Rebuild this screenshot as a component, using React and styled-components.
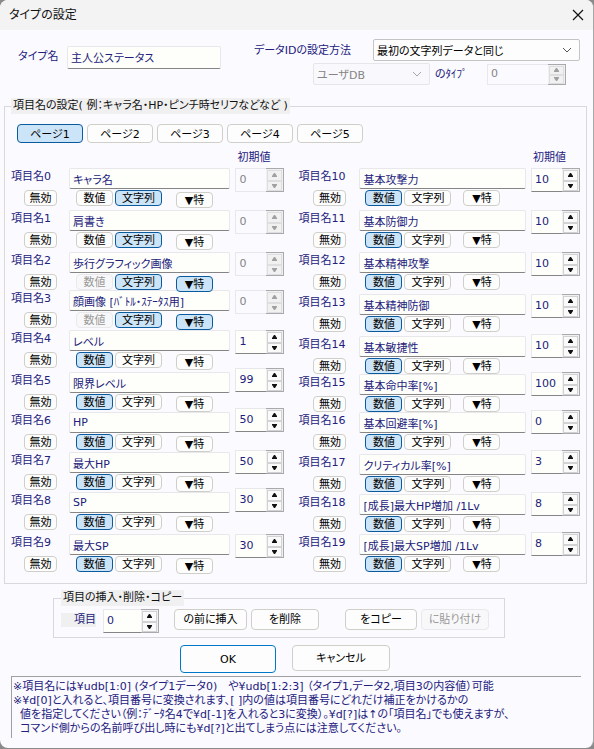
import React, { useState } from "react";
import styled, { createGlobalStyle, css } from "styled-components";

const navy = "#22207c";

const GlobalStyle = createGlobalStyle`
  *, *::before, *::after { box-sizing: border-box; }
  body { margin: 0; background: #8a8a8a; }
  body, button, input, select {
    font-family: "DejaVu Sans", "Noto Sans CJK JP", sans-serif;
    font-size: 11px;
    font-feature-settings: "palt";
  }
`;

const Dialog = styled.main`
  display: flex;
  flex-direction: column;
  min-height: calc(100vh - 1px);
  background: #fbfaff;
  border-right: 1px solid #a8a8a8;
  border-radius: 8px;
  color: ${navy};
  overflow: hidden;
  line-height: 14px;
  white-space: nowrap;
`;

const TitleBar = styled.header`
  display: flex;
  align-items: center;
  justify-content: space-between;
  height: 30px;
  padding: 0 9px;
  background: #f3f3f3;
  color: #111;
`;

const Title = styled.h1`
  margin: 0;
  font-size: 12px;
  font-weight: 400;
`;

const CloseButton = styled.button`
  display: flex;
  padding: 0;
  border: 0;
  background: none;
  color: #111;
`;

const TypeSettings = styled.section`
  display: flex;
  justify-content: space-between;
  height: 68px;
  padding: 9px 13px 0 18px;
`;

const NameField = styled.div`
  display: flex;
  align-items: center;
  height: 22px;
  margin-top: 7px;
`;

const NameLabel = styled.label`
  width: 49px;
`;

const IdSettings = styled.div`
  width: 326px;
`;

const IdRow = styled.div`
  display: flex;
  align-items: center;
  height: 22px;
  margin-bottom: 2px;
  padding-left: ${(p) => (p.$indent ? "59px" : 0)};
`;

const MethodLabel = styled.label`
  flex: 1;
  padding-top: 2px;
`;

const SelectBox = styled.span`
  display: grid;
  grid-template-columns: 1fr 18px;
  align-items: center;
  width: ${(p) => p.$width};
  height: 22px;
  border: 1px solid ${(p) => (p.$off ? "#e6e5e8" : "#c4c4c4")};
  border-radius: 2px;
  background: ${(p) => (p.$off ? "#f9f8fc" : "#fdfdfd")};
  color: ${(p) => (p.$off ? "#a6a6a6" : "#555")};

  select {
    grid-area: 1 / 1 / 2 / 3;
    width: 100%;
    height: 20px;
    padding: 2px 3px 0;
    border: 0;
    appearance: none;
    background: none;
    color: #000;
  }
  select:disabled { color: #858585; opacity: 1; }
  svg { grid-area: 1 / 2; pointer-events: none; }
`;

const TypeLabel = styled.label`
  width: 57px;
  padding: 2px 0 0 5px;
`;

const TextInput = styled.input`
  width: ${(p) => p.$width || "100%"};
  height: ${(p) => (p.$width ? "23px" : "21px")};
  padding: 0 3px;
  border: 1px solid #e8e7eb;
  border-bottom-color: #858585;
  border-radius: 2px;
  background: #fefffa;
  color: ${navy};
  line-height: 14px;
`;

const Spin = styled.span`
  display: grid;
  grid-template-columns: 1fr 18px;
  width: ${(p) => p.$width || "100%"};
  height: ${(p) => (p.$short ? "21px" : "24px")};
  flex: none;

  input {
    min-width: 0;
    width: 100%;
    padding: 0 0 1px 3px;
    border: 1px solid #e8e7eb;
    border-right: 0;
    border-bottom-color: #858585;
    background: #fefffa;
    color: ${navy};
  }
  input:disabled {
    border-bottom-color: #e8e7eb;
    background: #fbfaff;
    color: #858585;
  }
`;

const Arrows = styled.span`
  display: grid;
  grid-template-rows: 1fr 1fr;
  padding: 1px 1px 0;
  border: 1px solid #a9a9ad;
  border-left: 0;
  background: #f0f0f0;
`;

const Arrow = styled.button`
  display: flex;
  align-items: center;
  justify-content: center;
  min-height: 0;
  padding: 0;
  border: 1px solid #d2d2d4;
  background: #fafafa;
  color: #111;
  &:disabled { color: #a0a0a0; background: #f1f1f1; border-color: #dedee0; }
`;

const Group = styled.fieldset`
  min-width: 0;
  margin: 0 6px 0 4px;
  padding: 0 6px 11px;
  border: 1px solid #d9d8dc;
`;

const Legend = styled.legend`
  height: 16px;
  padding: 0 2px;
  background: #f0f0f0;
  color: #111;
  line-height: 15px;
`;

const Tabs = styled.nav`
  display: flex;
  gap: 4px;
  padding: 10px 6px 0;
`;

const onStyle = css`
  border-color: #0a5a9e;
  background: #cce4f7;
`;

const Button = styled.button`
  height: 16px;
  padding: 1px 0 0;
  border: 1px solid #cfcec8;
  border-radius: 4px;
  background: #fdfdfd;
  color: #000;
  line-height: 12px;
  white-space: nowrap;
  ${(p) => p.$on && onStyle}
  &:disabled { color: #989898; border-color: #e9e9ec; background: #f8f8fa; }
`;

const TabButton = styled(Button)`
  width: 66px;
  height: 19px;
  padding-top: 2px;
`;

const Halves = styled.div`
  display: grid;
  grid-template-columns: 273fr 281fr;
  gap: 14px;
  padding-top: 6px;
`;

const Half = styled.section`
  display: grid;
  grid-template-columns: 1fr 49px;
  column-gap: 5px;
`;

const ValuesHeading = styled.div`
  grid-column: 2;
  height: 19px;
  padding: 2px 0 0 2px;
`;

const Items = styled.div`
  grid-column: 1;
`;

const Values = styled.div`
  grid-column: 2;
`;

const Item = styled.div`
  display: grid;
  grid-template-columns: ${(p) => p.$labelWidth} 1fr;
  grid-template-rows: 21px 16px;
  row-gap: 1px;
  height: ${(p) => p.$height};
`;

const ItemLabel = styled.label`
  padding-top: 2px;
`;

const ValueCell = styled.div`
  height: ${(p) => p.$height};
`;

const DisableButton = styled(Button)`
  width: 33px;
  margin-left: ${(p) => p.$indent};
`;

const KindButtons = styled.div`
  display: flex;
  gap: 2px;
  padding-left: ${(p) => (p.$low ? "7px" : "6px")};
  z-index: 1;
`;

const NumberButton = styled(Button)`
  width: 37px;
`;

const StringButton = styled(Button)`
  width: 47px;
`;

const SpecialButton = styled(Button)`
  width: 37px;
  margin-left: ${(p) => (p.$low ? "12px" : "10px")};
  margin-top: ${(p) => (p.$low ? "2px" : 0)};
`;

const EditGroup = styled(Group)`
  align-self: flex-start;
  width: 452px;
  max-width: calc(100% - 59px);
  margin: 6px 0 0 53px;
  padding: 0 15px 4px 7px;
`;

const EditRow = styled.div`
  display: flex;
  align-items: flex-start;
  gap: 4px;
  padding-top: 3px;
`;

const EditLabel = styled.label`
  width: 35px;
  margin: 4px 3px 0 0;
  background: #f0f0f0;
  text-align: right;
`;

const EditButton = styled(Button)`
  width: ${(p) => p.$width};
  height: 21px;
  margin-left: ${(p) => p.$gap || 0};
`;

const Actions = styled.footer`
  display: flex;
  gap: 16px;
  padding: 7px 0 3px 180px;
`;

const ActionButton = styled(Button)`
  width: ${(p) => (p.$primary ? "96px" : "98px")};
  height: ${(p) => (p.$primary ? "28px" : "26px")};
  padding-top: 2px;
  border-color: ${(p) => (p.$primary ? "#0078c8" : "#cfcec8")};
`;

const Notes = styled.p`
  margin: 0 12px 0 11px;
  min-height: 62px;
  padding: 3px 0 0 1px;
  border-top: 1px solid #a0a0a0;
  border-left: 1px solid #a0a0a0;
  white-space: pre;
`;

const Chevron = () => (
  <svg width="12" height="8" viewBox="0 0 12 8" fill="none" stroke="currentColor" strokeWidth="1">
    <path d="M2 2l4 4 4-4" />
  </svg>
);

function Spinner({ id, label, value, disabled, width, short }) {
  const [current, setCurrent] = useState(value);
  return (
    <Spin $width={width} $short={short}>
      <input
        id={id}
        aria-label={label}
        value={current}
        disabled={disabled}
        onChange={(e) => setCurrent(e.target.value)}
      />
      <Arrows>
        <Arrow type="button" aria-label="増やす" disabled={disabled} onClick={() => setCurrent(Number(current) + 1)}>
          <svg width="7" height="4" viewBox="0 0 7 4" fill="currentColor"><path d="M3 0h1L6 3v1H1V3z" /></svg>
        </Arrow>
        <Arrow type="button" aria-label="減らす" disabled={disabled} onClick={() => setCurrent(Number(current) - 1)}>
          <svg width="7" height="4" viewBox="0 0 7 4" fill="currentColor"><path d="M3 4h1L6 1V0H1v1z" /></svg>
        </Arrow>
      </Arrows>
    </Spin>
  );
}

const leftItems = [
  { name: "キャラ名", text: true, value: 0, height: 42, valueHeight: 42 },
  { name: "肩書き", text: true, value: 0, height: 42, valueHeight: 42 },
  { name: "歩行グラフィック画像", text: true, special: true, value: 0, height: 38, valueHeight: 38 },
  { name: "顔画像 [ﾊﾞﾄﾙ・ｽﾃｰﾀｽ用]", text: true, special: true, value: 0, height: 40, valueHeight: 40 },
  { name: "レベル", value: 1, height: 42, valueHeight: 38 },
  { name: "限界レベル", value: 99, height: 40, valueHeight: 40 },
  { name: "HP", value: 50, height: 40, valueHeight: 42 },
  { name: "最大HP", value: 50, height: 40, valueHeight: 38 },
  { name: "SP", value: 30, height: 42, valueHeight: 46 },
  { name: "最大SP", value: 30, height: 38, valueHeight: 38 },
];

const rightItems = [
  { name: "基本攻撃力", value: 10, height: 42, valueHeight: 42 },
  { name: "基本防御力", value: 10, height: 42, valueHeight: 42 },
  { name: "基本精神攻撃", value: 10, height: 42, valueHeight: 42 },
  { name: "基本精神防御", value: 10, height: 42, valueHeight: 40 },
  { name: "基本敏捷性", value: 10, height: 38, valueHeight: 38 },
  { name: "基本命中率[%]", value: 100, height: 38, valueHeight: 38 },
  { name: "基本回避率[%]", value: 0, height: 42, valueHeight: 40 },
  { name: "クリティカル率[%]", value: 3, height: 40, valueHeight: 42 },
  { name: "[成長]最大HP増加 /1Lv", value: 8, height: 40, valueHeight: 40 },
  { name: "[成長]最大SP増加 /1Lv", value: 8, height: 38, valueHeight: 38 },
];

function ItemColumn({ items, first, labelWidth, indent, low }) {
  return (
    <Half>
      <ValuesHeading>初期値</ValuesHeading>
      <Items>
        {items.map((item, i) => (
          <Item key={item.name} $height={`${item.height}px`} $labelWidth={labelWidth}>
            <ItemLabel htmlFor={`item${first + i}`}>項目名{first + i}</ItemLabel>
            <TextInput id={`item${first + i}`} defaultValue={item.name} />
            <DisableButton type="button" $indent={indent}>無効</DisableButton>
            <KindButtons $low={low}>
              <NumberButton type="button" $on={!item.text} disabled={item.special}>数値</NumberButton>
              <StringButton type="button" $on={item.text}>文字列</StringButton>
              <SpecialButton type="button" $on={item.special} $low={low}>▼特</SpecialButton>
            </KindButtons>
          </Item>
        ))}
      </Items>
      <Values>
        {items.map((item, i) => (
          <ValueCell key={item.name} $height={`${item.valueHeight}px`}>
            <Spinner label={`項目名${first + i} 初期値`} value={item.value} disabled={item.text} />
          </ValueCell>
        ))}
      </Values>
    </Half>
  );
}

const notes = `※項目名には¥udb[1:0] (タイプ1データ0)　や¥udb[1:2:3] （タイプ1,データ2,項目3の内容値）可能
※¥d[0]と入れると、項目番号に変換されます、[ ]内の値は項目番号にどれだけ補正をかけるかの
  値を指定してください（例：ﾃﾞｰﾀ名4で¥d[-1]を入れると3に変換）。¥d[?]は↑の「項目名」でも使えますが、
  コマンド側からの名前呼び出し時にも¥d[?]と出てしまう点には注意してください。`;

export default function App() {
  const [page, setPage] = useState(1);
  return (
    <>
      <GlobalStyle />
      <Dialog>
        <TitleBar>
          <Title>タイプの設定</Title>
          <CloseButton type="button" aria-label="閉じる">
            <svg width="12" height="12" viewBox="0 0 12 12" fill="none" stroke="currentColor" strokeWidth="1.2">
              <path d="M1 1l10 10M11 1L1 11" />
            </svg>
          </CloseButton>
        </TitleBar>

        <TypeSettings>
          <NameField>
            <NameLabel htmlFor="typeName">タイプ名</NameLabel>
            <TextInput id="typeName" $width="154px" defaultValue="主人公ステータス" />
          </NameField>
          <IdSettings>
            <IdRow>
              <MethodLabel htmlFor="method">データIDの設定方法</MethodLabel>
              <SelectBox $width="207px">
                <select id="method"><option>最初の文字列データと同じ</option></select>
                <Chevron />
              </SelectBox>
            </IdRow>
            <IdRow $indent>
              <SelectBox $width="117px" $off>
                <select aria-label="データベース" disabled><option>ユーザDB</option></select>
                <Chevron />
              </SelectBox>
              <TypeLabel htmlFor="typeNumber">のﾀｲﾌﾟ</TypeLabel>
              <Spinner id="typeNumber" value={0} width="79px" short disabled />
            </IdRow>
          </IdSettings>
        </TypeSettings>

        <Group>
          <Legend>項目名の設定( 例：キャラ名・HP・ピンチ時セリフなどなど )</Legend>
          <Tabs>
            {[1, 2, 3, 4, 5].map((n) => (
              <TabButton key={n} type="button" $on={n === page} onClick={() => setPage(n)}>
                ページ{n}
              </TabButton>
            ))}
          </Tabs>
          <Halves>
            <ItemColumn items={leftItems} first={0} labelWidth="58px" indent="13px" low />
            <ItemColumn items={rightItems} first={10} labelWidth="61px" indent="15px" />
          </Halves>
        </Group>

        <EditGroup>
          <Legend>項目の挿入・削除・コピー</Legend>
          <EditRow>
            <EditLabel htmlFor="editItem">項目</EditLabel>
            <Spinner id="editItem" value={0} width="56px" />
            <EditButton type="button" $width="73px" $gap="11px">の前に挿入</EditButton>
            <EditButton type="button" $width="68px">を削除</EditButton>
            <EditButton type="button" $width="72px" $gap="22px">をコピー</EditButton>
            <EditButton type="button" $width="68px" disabled>に貼り付け</EditButton>
          </EditRow>
        </EditGroup>

        <Actions>
          <ActionButton type="button" $primary>OK</ActionButton>
          <ActionButton type="button">キャンセル</ActionButton>
        </Actions>

        <Notes>{notes}</Notes>
      </Dialog>
    </>
  );
}
